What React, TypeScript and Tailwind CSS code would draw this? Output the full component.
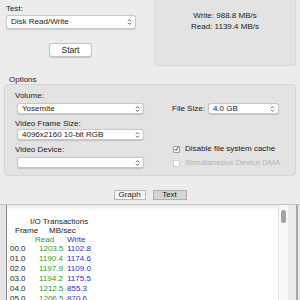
import React from 'react'

function Chevrons() {
  return (
    <svg width="5" height="8" viewBox="0 0 5 8" className="shrink-0">
      <path d="M1 3.2 L2.5 1.6 L4 3.2" fill="none" stroke="#5a5a5a" strokeWidth="0.9" />
      <path d="M1 4.8 L2.5 6.4 L4 4.8" fill="none" stroke="#5a5a5a" strokeWidth="0.9" />
    </svg>
  )
}

function Select({ value, className }: { value: string; className: string }) {
  return (
    <div
      className={`flex items-center justify-between bg-white rounded-[3px] border border-[#c9c9c9] shadow-[0_0.5px_1px_rgba(0,0,0,0.15)] pl-[4px] pr-[3px] ${className}`}
    >
      <span className="text-[8px] leading-none text-[#1a1a1a]">{value}</span>
      <Chevrons />
    </div>
  )
}

function Checkbox({ label, checked, disabled }: { label: string; checked?: boolean; disabled?: boolean }) {
  return (
    <div className="flex items-center h-[10px]">
      <div
        className={`w-[7px] h-[7px] ml-[1px] rounded-[1px] border bg-white flex items-center justify-center ${
          disabled ? 'border-[#d0d0d0]' : 'border-[#9a9a9a]'
        }`}
      >
        {checked && (
          <svg width="6" height="6" viewBox="0 0 6 6">
            <path d="M1 3.2 L2.4 4.8 L5 0.8" fill="none" stroke="#222" strokeWidth="1" />
          </svg>
        )}
      </div>
      <span className={`ml-[5px] text-[8px] leading-none ${disabled ? 'text-[#b4b4b4]' : 'text-[#1a1a1a]'}`}>
        {label}
      </span>
    </div>
  )
}

const rows = [
  ['00.0', '1203.5', '1102.8'],
  ['01.0', '1190.4', '1174.6'],
  ['02.0', '1197.9', '1109.0'],
  ['03.0', '1194.2', '1175.5'],
  ['04.0', '1212.5', '855.3'],
  ['05.0', '1206.5', '870.6'],
]

export default function App() {
  return (
    <div className="w-[300px] h-[300px] overflow-hidden bg-[#ececec] font-['Liberation_Sans',Arial,sans-serif] text-[#1a1a1a]">
      {/* Top: test selection and results */}
      <div className="flex h-[66px]">
        <div className="w-[154px] pl-[6px] pt-[4px]">
          <div className="text-[8px] leading-[10px] h-[10px]">Test:</div>
          <Select value="Disk Read/Write" className="mt-[1px] w-[130px] h-[14px]" />
          <button className="ml-[43px] mt-[14px] w-[43px] h-[14px] flex items-center justify-center bg-white rounded-[3px] border border-[#c4c4c4] shadow-[0_0.5px_1px_rgba(0,0,0,0.15)] text-[8.5px] leading-none">
            Start
          </button>
        </div>
        <div className="w-[142px] h-[66px] bg-[#e3e3e3] border border-t-0 border-[#d9d9d9] rounded-b-[4px] pt-[10px] flex flex-col items-center">
          <div className="text-[8px] leading-[11px]">Write: 988.8 MB/s</div>
          <div className="text-[8px] leading-[11px]">Read: 1139.4 MB/s</div>
        </div>
      </div>

      {/* Options */}
      <div className="mt-[9px] pl-[9px] text-[8px] leading-[9px] h-[9px]">Options</div>
      <div className="mx-[4px] h-[92px] bg-[#e3e3e3] border border-[#d6d6d6] rounded-[4px] flex">
        <div className="w-[140px] pl-[10px] pt-[6px]">
          <div className="text-[8px] leading-[10px]">Volume:</div>
          <Select value="Yosemite" className="mt-[2px] ml-[2px] w-[127px] h-[11px]" />
          <div className="mt-[5px] text-[8px] leading-[10px]">Video Frame Size:</div>
          <Select value="4096x2160 10-bit RGB" className="ml-[2px] w-[127px] h-[11px]" />
          <div className="mt-[5px] text-[8px] leading-[10px]">Video Device:</div>
          <Select value="" className="mt-[2px] ml-[2px] w-[127px] h-[11px]" />
        </div>
        <div className="ml-[27px] pt-[18px]">
          <div className="flex items-center h-[11px]">
            <span className="text-[8px] leading-none">File Size:</span>
            <Select value="4.0 GB" className="ml-[3px] w-[71px] h-[11px]" />
          </div>
          <div className="mt-[30px]">
            <Checkbox label="Disable file system cache" checked />
          </div>
          <div className="mt-[4px]">
            <Checkbox label="Simultaneous Device DMA" disabled />
          </div>
        </div>
      </div>

      {/* Graph / Text tabs */}
      <div className="mt-[14px] flex justify-center gap-[7px] h-[10px]">
        <div className="w-[32px] h-[10px] bg-[#f6f6f6] border border-[#b9b9b9] flex items-center justify-center text-[8px] leading-none">
          Graph
        </div>
        <div className="w-[34px] h-[10px] bg-[#d5d5d5] border border-[#b0b0b0] flex items-center justify-center text-[8px] leading-none">
          Text
        </div>
      </div>
      <div className="mt-[4px] h-[1px] bg-[#c6c6c6]" />

      {/* Text view */}
      <div className="flex h-[95px]">
        <div className="w-[6px] bg-[#e4e4e4]" />
        <div className="w-[1px] bg-[#8a8a8a]" />
        <div className="flex-1 bg-white shadow-[inset_0_4px_4px_-2px_rgba(0,0,0,0.12)] pt-[12px] text-[8px]">
          <div className="pl-[23px] leading-[9px]">I/O Transactions</div>
          <div className="flex leading-[9px]">
            <span className="pl-[8px] w-[42px]">Frame</span>
            <span>MB/sec</span>
          </div>
          <div className="flex leading-[9px]">
            <span className="pl-[28px] w-[60px] text-[#2a9a2a]">Read</span>
            <span className="text-[#2e2ed6]">Write</span>
          </div>
          {rows.map(([f, r, w]) => (
            <div key={f} className="flex leading-[10px]">
              <span className="pl-[3px] w-[32px]">{f}</span>
              <span className="w-[28px] text-[#2a9a2a]">{r}</span>
              <span className="text-[#2e2ed6]">{w}</span>
            </div>
          ))}
        </div>
        <div className="w-[10px] bg-[#f8f8f8] border-l border-[#e2e2e2] pt-[5px] flex justify-center">
          <div className="w-[5px] h-[13px] rounded-full bg-[#a3a3a3]" />
        </div>
        <div className="w-[8px] bg-[#ebebeb]" />
        <div className="w-[2px] bg-[#a6a6a6]" />
        <div className="w-[2px] bg-[#ececec]" />
      </div>
    </div>
  )
}
